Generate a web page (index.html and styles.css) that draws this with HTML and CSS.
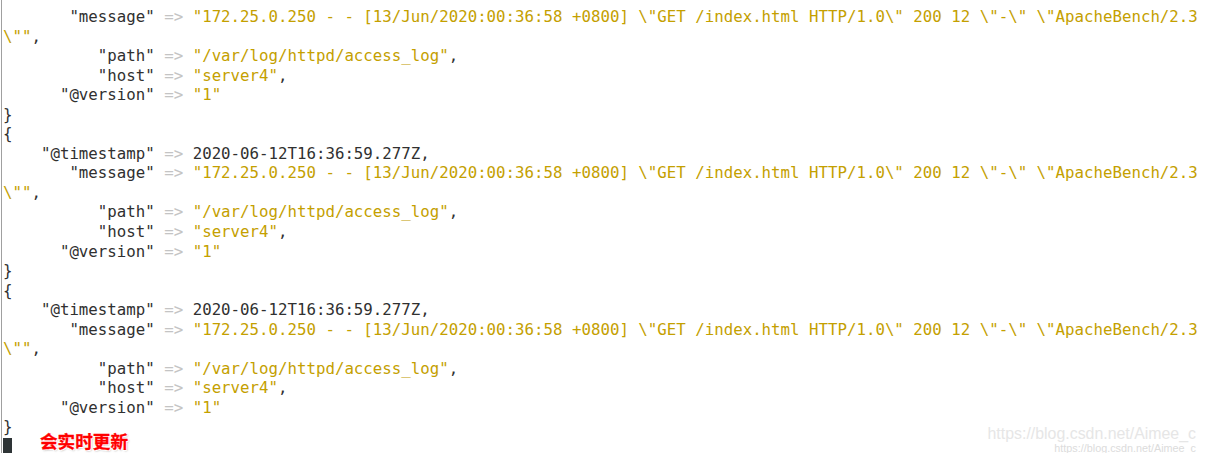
FILE: index.html
```html
<!DOCTYPE html>
<html>
<head>
<meta charset="utf-8">
<link rel="stylesheet" href="styles.css">
</head>
<body>
<div class="term">
<div class="ln">       <span class="k">"message"</span> <span class="a">=&gt;</span> <span class="s">"172.25.0.250 - - [13/Jun/2020:00:36:58 +0800] \"GET /index.html HTTP/1.0\" 200 12 \"-\" \"ApacheBench/2.3</span></div>
<div class="ln"><span class="s">\""</span><span class="k">,</span></div>
<div class="ln">          <span class="k">"path"</span> <span class="a">=&gt;</span> <span class="s">"/var/log/httpd/access_log"</span><span class="k">,</span></div>
<div class="ln">          <span class="k">"host"</span> <span class="a">=&gt;</span> <span class="s">"server4"</span><span class="k">,</span></div>
<div class="ln">      <span class="k">"@version"</span> <span class="a">=&gt;</span> <span class="s">"1"</span></div>
<div class="ln"><span class="k">}</span></div>
<div class="ln"><span class="k">{</span></div>
<div class="ln">    <span class="k">"@timestamp"</span> <span class="a">=&gt;</span> <span class="k">2020-06-12T16:36:59.277Z,</span></div>
<div class="ln">       <span class="k">"message"</span> <span class="a">=&gt;</span> <span class="s">"172.25.0.250 - - [13/Jun/2020:00:36:58 +0800] \"GET /index.html HTTP/1.0\" 200 12 \"-\" \"ApacheBench/2.3</span></div>
<div class="ln"><span class="s">\""</span><span class="k">,</span></div>
<div class="ln">          <span class="k">"path"</span> <span class="a">=&gt;</span> <span class="s">"/var/log/httpd/access_log"</span><span class="k">,</span></div>
<div class="ln">          <span class="k">"host"</span> <span class="a">=&gt;</span> <span class="s">"server4"</span><span class="k">,</span></div>
<div class="ln">      <span class="k">"@version"</span> <span class="a">=&gt;</span> <span class="s">"1"</span></div>
<div class="ln"><span class="k">}</span></div>
<div class="ln"><span class="k">{</span></div>
<div class="ln">    <span class="k">"@timestamp"</span> <span class="a">=&gt;</span> <span class="k">2020-06-12T16:36:59.277Z,</span></div>
<div class="ln">       <span class="k">"message"</span> <span class="a">=&gt;</span> <span class="s">"172.25.0.250 - - [13/Jun/2020:00:36:58 +0800] \"GET /index.html HTTP/1.0\" 200 12 \"-\" \"ApacheBench/2.3</span></div>
<div class="ln"><span class="s">\""</span><span class="k">,</span></div>
<div class="ln">          <span class="k">"path"</span> <span class="a">=&gt;</span> <span class="s">"/var/log/httpd/access_log"</span><span class="k">,</span></div>
<div class="ln">          <span class="k">"host"</span> <span class="a">=&gt;</span> <span class="s">"server4"</span><span class="k">,</span></div>
<div class="ln">      <span class="k">"@version"</span> <span class="a">=&gt;</span> <span class="s">"1"</span></div>
<div class="ln"><span class="k">}</span></div>
<div class="ln"><span class="cursor"></span></div>
</div>
<div class="note">会实时更新</div>
<div class="wm">
  <div class="wm-big">https://blog.csdn.net/Aimee_c</div>
  <div class="wm-small">https://blog.csdn.net/Aimee_c</div>
</div>
</body>
</html>
```
FILE: styles.css
```css
html, body {
  margin: 0;
  padding: 0;
  background: #ffffff;
  width: 1205px;
  height: 453px;
  overflow: hidden;
  position: relative;
}
.term {
  border-left: 1px solid #a0a0a0;
  margin-left: 1px;
  padding: 7px 0 0 1px;
  font-family: "DejaVu Sans Mono", monospace;
  font-size: 15.75px;
  line-height: 19.55px;
  color: #303030;
  height: 453px;
  box-sizing: border-box;
}
.ln {
  white-space: pre;
  height: 19.55px;
}
.k { color: #303030; }
.a { color: #c4c4c4; }
.s { color: #c4a000; }
.cursor {
  display: inline-block;
  width: 9px;
  height: 17px;
  background: #2e3436;
  vertical-align: top;
  margin-top: 1px;
}
.note {
  position: absolute;
  left: 40px;
  top: 430px;
  font-family: "Noto Sans CJK SC", sans-serif;
  font-weight: 700;
  font-size: 17.6px;
  line-height: 22px;
  color: #ff0000;
  -webkit-text-stroke: 0.3px #ff0000;
  text-shadow: 1px 1px 0 #fff, -1px -1px 0 #fff, 1px -1px 0 #fff, -1px 1px 0 #fff, 1px 1px 2px #999;
}
.wm {
  position: absolute;
  right: 9px;
  top: 425px;
  display: flex;
  flex-direction: column;
  align-items: flex-end;
  font-family: "Liberation Sans", Arial, sans-serif;
}
.wm-big {
  font-size: 15.9px;
  line-height: 18px;
  color: #e6e6e6;
}
.wm-small {
  font-size: 10.8px;
  line-height: 11px;
  color: #dcdcdc;
  margin-top: 0;
}
```
